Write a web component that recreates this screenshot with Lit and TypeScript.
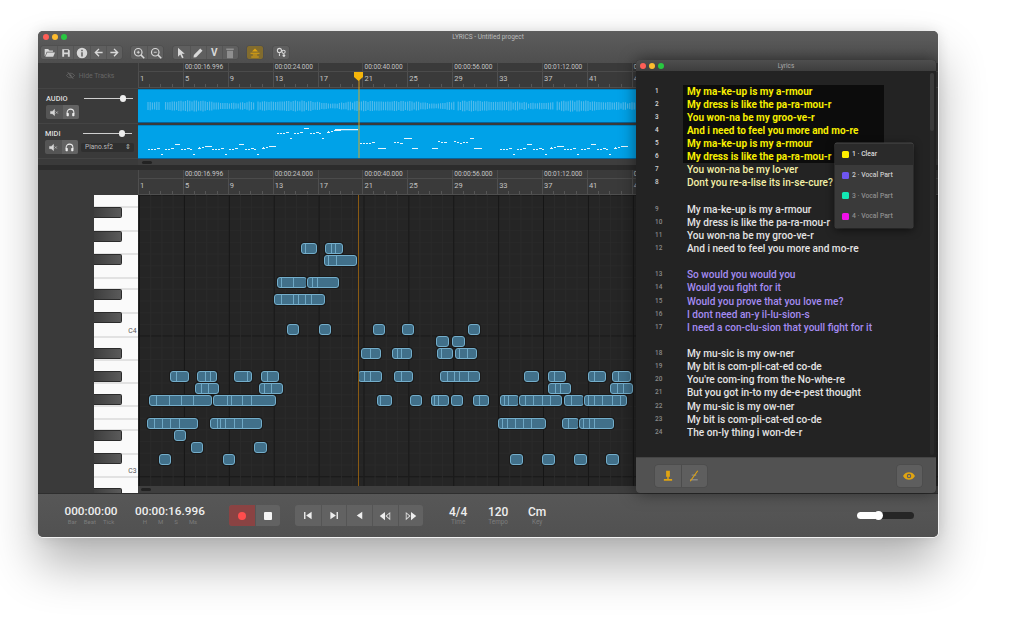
import { LitElement, html, css, svg } from "lit";
import { customElement } from "lit/decorators.js";

const W = "#d8d8d8";
const ic = (body: unknown, fill = W, size = 11) =>
  html`<svg width=${size} height=${size} viewBox="0 0 16 16" fill=${fill}>${body}</svg>`;

const icons = {
  folder: ic(svg`<path d="M1 3h5l2 2h5v2H4L1.5 13H1zM4.6 8H16l-2.6 6H2z"/>`),
  save: ic(svg`<path d="M2 2h10l2 2v10H2zM5 3v4h6V3zM5 10v4h6v-4z" fill-rule="evenodd"/>`, W, 10),
  info: ic(svg`<path d="M8 1a7 7 0 110 14A7 7 0 018 1zM7 3.5v2h2v-2zM7 7v5.5h2V7z" fill-rule="evenodd"/>`, W, 12),
  left: ic(svg`<path d="M8 2l1.4 1.4L6 7h8v2H6l3.4 3.6L8 14 2 8z"/>`),
  right: ic(svg`<path d="M8 2L6.6 3.4 10 7H2v2h8l-3.4 3.6L8 14l6-6z"/>`),
  zoomIn: ic(svg`<circle cx="7" cy="7" r="5" fill="none" stroke=${W} stroke-width="1.6"/><path d="M10.5 10.5L15 15" stroke=${W} stroke-width="2"/><path d="M5 7h4M7 5v4" stroke=${W} stroke-width="1.2"/>`, "none", 12),
  zoomOut: ic(svg`<circle cx="7" cy="7" r="5" fill="none" stroke=${W} stroke-width="1.6"/><path d="M10.5 10.5L15 15" stroke=${W} stroke-width="2"/><path d="M5 7h4" stroke=${W} stroke-width="1.2"/>`, "none", 12),
  cursor: ic(svg`<path d="M4 1l9 8H9l2.5 5-2 1L7 10l-3 3z"/>`, W, 12),
  pencil: ic(svg`<path d="M11 2l3 3-8.5 8.5L2 14l.5-3.5z"/>`, W, 12),
  trash: ic(svg`<path d="M3 2h10v2H3zM4 5h8v10H4z" fill="#8f8f8f"/>`, "#8f8f8f", 12),
  gold: ic(svg`<path d="M8 2l4 4H4zM2 7.5h12v1.4H2zM5 10h6v1.4H5zM3 12.5h10V14H3z"/>`, "#e0a411", 12),
  knobs: ic(svg`<circle cx="5" cy="5" r="3" fill="none" stroke=${W} stroke-width="1.6"/><circle cx="11" cy="7" r="2.4" fill="none" stroke=${W} stroke-width="1.5"/><circle cx="11.5" cy="12.5" r="2" fill=${W}/><path d="M5 9v4" stroke=${W} stroke-width="1.5"/>`, "none", 11),
  mute: ic(svg`<path d="M1 6h3l4-3.5v11L4 10H1zM10 6l4 4M14 6l-4 4" stroke=${W} stroke-width="1"/>`),
  phones: ic(svg`<path d="M2 10V8a6 6 0 0112 0v2" fill="none" stroke="#eee" stroke-width="1.8"/><rect x="1" y="9" width="4" height="5.5" rx="1" fill="#eee"/><rect x="11" y="9" width="4" height="5.5" rx="1" fill="#eee"/>`, "none"),
  toStart: ic(svg`<path d="M3 3h2v10H3zM14 2.5v11L6 8z"/>`, "#eee"),
  toEnd: ic(svg`<path d="M13 3h-2v10h2zM2 2.5v11L10 8z"/>`, "#eee"),
  back: ic(svg`<path d="M12 2.5v11L4 8z"/>`, "#eee"),
  rew: ic(svg`<path d="M8 2.5v11L1 8z"/><path d="M15 2.500v11L8.500 8zM13.800 5L10.500 8l3.300 3z" fill="#ddd" fill-rule="evenodd"/>`, "#eee", 12),
  ffw: ic(svg`<path d="M8 2.500v11L15 8z"/><path d="M1 2.500v11L7.500 8zM2.200 5L5.500 8l-3.300 3z" fill="#ddd" fill-rule="evenodd"/>`, "#eee", 12),
  mic: ic(svg`<path d="M5.500 1h5v8h-5zM7 9h2v3H7zM2.500 12h11v2.200h-11z"/>`, "#e0a411", 12),
  micOff: ic(svg`<path d="M3 12h10v2H3zM5 6h6v1.500H5z" fill="#888"/><path d="M13 1L3 15" stroke="#e0a411" stroke-width="1.500"/>`, "none", 12),
  eye: ic(svg`<path d="M0 8c2-3.600 5-5 8-5s6 1.400 8 5c-2 3.600-5 5-8 5s-6-1.400-8-5zM8 5a3 3 0 100 6 3 3 0 000-6z" fill-rule="evenodd"/><circle cx="8" cy="8" r="1.500"/>`, "#e0a411", 12),
  hide: ic(svg`<path d="M1 8c2-3 4.500-4 7-4s5 1 7 4c-2 3-4.500 4-7 4S3 11 1 8z" fill="none" stroke="#6d6d6d" stroke-width="1.400"/><circle cx="8" cy="8" r="1.800" fill="#6d6d6d"/><path d="M3 2l10 12" stroke="#6d6d6d" stroke-width="1.400"/>`, "none", 9),
};

const timeLabels = ["", "00:00:16.996", "", "00:00:24.000", "", "00:00:40.000", "", "00:00:56.000", "", "00:01:12.000", "", "00:01:28.000"];
const bars = Array.from({ length: 12 }, (_, i) => 1 + i * 4);

@customElement("time-ruler")
class TimeRuler extends LitElement {
  static styles = css`
    :host { display: block; height: 100%; background: #3a3a3a; overflow: hidden; font: 400 6.600px Roboto, sans-serif; color: #c4c4c4; }
    .top { display: flex; height: 8px; border-bottom: 1px solid #4b4b4b; }
    .top span { flex: 0 0 44.9px; box-sizing: border-box; border-left: 1px solid #4b4b4b; padding-left: 1px; line-height: 8px; white-space: nowrap; }
    .bot { display: flex; height: 15px; border-bottom: 1px solid #4f4f4f; }
    .bot span { flex: 0 0 44.9px; box-sizing: border-box; border-left: 1px solid #4f4f4f; padding: 2px 0 0 1px; line-height: 9px; white-space: nowrap;
      font-size: 7.500px;
      background: repeating-linear-gradient(90deg, transparent 0 10.2px, #565656 10.2px 11.22px) 0 100% / 100% 3px no-repeat; }
  `;
  render() {
    return html`<div class="top">${timeLabels.map((t) => html`<span>${t}</span>`)}</div>
      <div class="bot">${bars.map((b) => html`<span>${b}</span>`)}</div>`;
  }
}

function wavePath() {
  let d = "";
  const gaps = [[160, 164], [255, 257], [455, 457], [554, 556]];
  for (let x = 10; x < 500; x += 2.2) {
    const real = x + 138;
    if (gaps.some(([a, b]) => real > a && real < b)) continue;
    const env = 2 + 2.2 * Math.abs(Math.sin(x * 0.032));
    const h = env + 1.6 * Math.abs(Math.sin(x * 0.41)) * Math.abs(Math.sin(x * 1.37));
    d += `M${x.toFixed(1)} ${(16 - h).toFixed(1)}v${(h * 2).toFixed(1)}`;
  }
  return d;
}

// One phrase of the mini MIDI view: [dx, y, width]
const motif = [[0,23,2],[3,23,2],[6,23,2],[9,22,3],[13,28,2],[17,23,2],[20,23,2],[23,22,3],[27,18,5],[33,23,2],[36,23,2],[39,22,3],[42,23,2],[45,28,2],[51,21,1],[50,22,3],[54,21,2],[57,20,7]];
function midiPath() {
  let d = "";
  const put = (ox: number, dy: number) =>
    motif.forEach(([x, y, w]) => { d += `M${ox + x} ${y + dy}h${w}v1h${-w}z`; });
  put(10, 0); put(74, 0);
  put(139, -16);
  d += "M197 3h23v1.300h-23z";
  [[222,17,2],[225,17,2],[228,17,2],[231,17,2],[234,16,3],[240,22,8],[256,16,2],[259,16,2],[262,17,3],[266,12,8],[274,22,6],[294,22,6],[300,15,2],[303,16,2],[306,16,3],[316,15,2],[319,16,2],[322,17,2],[325,16,2],[328,16,2],[332,12,4],[336,22,8]].forEach(([x, y, w]) => {
    d += `M${x} ${y}h${w}v1h${-w}z`;
  });
  put(362, 0); put(426, 0);
  return d;
}

const keyTops = [207, 231, 254, 289, 312, 348, 371, 394, 430, 453, 488];
const keyLines = [206, 230, 253, 277, 288, 312, 336, 359, 382, 405, 418, 429, 453, 476];

type Note = [number, number, number, number[]];
const notes: Note[] = [
  [301, 16, 243, [3]], [325, 18, 243, [5, 9]],
  [324, 33, 254.5, [3, 11]],
  [277, 30, 277, [3, 15]], [307, 32, 277, [4, 9]],
  [274, 51, 294, [6, 18, 23, 30, 36]],
  [287, 12, 324, []], [319, 12, 324, []], [373, 12, 324, []], [402, 12, 324, []], [468, 12, 324, []],
  [436, 13, 336, []], [452, 13, 336, []],
  [361, 20, 348, [8]], [392, 20, 348, [4, 8]], [437, 16, 348, [3]], [455, 22, 348, [3, 11]],
  [170, 19, 371, [5]], [197, 20, 371, [7, 12]], [234, 18, 371, [12]], [261, 18, 371, [5]],
  [358, 24, 371, [5, 11]], [394, 19, 371, [6]], [440, 40, 371, [6, 13, 18, 27]],
  [524, 15, 371, []], [548, 18, 371, [5]], [588, 18, 371, [5]], [612, 19, 371, [5]],
  [195, 24, 383, [5, 12]], [259, 24, 383, [4, 11]], [548, 23, 383, [6, 11]], [610, 23, 383, [6, 12]],
  [149, 63, 395, [6, 19, 31, 43]], [213, 63, 395, [13, 17, 28, 37]],
  [377, 15, 395, [2]], [410, 12, 395, []], [431, 18, 395, [2, 6]], [451, 12, 395, []], [473, 16, 395, [5]],
  [500, 19, 395, [3, 7]], [519, 43, 395, [5, 13, 22, 30]], [564, 20, 395, [6]], [584, 43, 395, [3, 9, 17, 27, 35]],
  [147, 51, 418, [6, 14, 22, 31]], [210, 52, 418, [6, 9, 14, 23, 31]],
  [498, 48, 418, [3, 8, 16, 24, 32]], [562, 17, 418, [5]], [579, 35, 418, [3, 9, 14]],
  [174, 12, 430, []], [191, 12, 442, []], [254, 13, 442, []],
  [159, 12, 454, []], [223, 12, 454, []], [510, 13, 454, []], [542, 13, 454, []], [574, 13, 454, []], [606, 13, 454, []],
];

const lyricLines: [string, string][] = [
  ["My ma-ke-up is my a-rmour", "sel"], ["My dress is like the pa-ra-mou-r", "sel"],
  ["You won-na be my groo-ve-r", "sel"], ["And i need to feel you more and mo-re", "sel"],
  ["My ma-ke-up is my a-rmour", "sel"], ["My dress is like the pa-ra-mou-r", "sel"],
  ["You won-na be my lo-ver", "pale"], ["Dont you re-a-lise its in-se-cure?", "pale"], ["", ""],
  ["My ma-ke-up is my a-rmour", ""], ["My dress is like the pa-ra-mou-r", ""],
  ["You won-na be my groo-ve-r", ""], ["And i need to feel you more and mo-re", ""], ["", ""],
  ["So would you would you", "vio"], ["Would you fight for it", "vio"], ["Would you prove that you love me?", "vio"],
  ["I dont need an-y il-lu-sion-s", "vio"], ["I need a con-clu-sion that youll fight for it", "vio"], ["", ""],
  ["My mu-sic is my ow-ner", ""], ["My bit is com-pli-cat-ed co-de", ""], ["You're com-ing from the No-whe-re", ""],
  ["But you got in-to my de-e-pest thought", ""], ["My mu-sic is my ow-ner", ""], ["My bit is com-pli-cat-ed co-de", ""],
  ["The on-ly thing i won-de-r", ""],
];

const menuItems = [
  ["1 · Clear", "#ffee00", "act"], ["2 · Vocal Part", "#6f55f0", "lit"],
  ["3 · Vocal Part", "#12e8b4", ""], ["4 · Vocal Part", "#f010e8", ""],
];

@customElement("app-root")
class AppRoot extends LitElement {
  static styles = css`
    :host { display: block; height: 629px; background: #fff; font-family: Roboto, sans-serif; overflow: hidden; }
    .win { position: relative; margin: 31px 0 0 38px; width: 900px; height: 506px; border-radius: 5px; overflow: hidden; display: flex; flex-direction: column; background: #555; }
    .shadow { position: absolute; left: 38px; top: 31px; width: 900px; height: 506px; border-radius: 5px; box-shadow: 0 1px 0 #f2f2f2, 1px 0 0 #f2f2f2, 0 28px 48px rgba(0,0,0,.3), 0 0 14px rgba(0,0,0,.12); }
    .head { position: relative; height: 32px; flex: none; background: linear-gradient(#5d5d5d, #4e4e4e); }
    .lights { display: flex; gap: 3px; }
    .lights i { width: 6px; height: 6px; border-radius: 50%; }
    .r { background: #ff5f57; } .y { background: #febc2e; } .g { background: #28c840; }
    .head .lights { position: absolute; left: 5px; top: 3px; }
    .title { text-align: center; font-size: 6.500px; color: #bdbdbd; line-height: 12px; }
    .tools { display: flex; padding: 3px 0 0 3px; height: 13px; }
    .grp { display: flex; background: #5f5f5f; border-radius: 2px; box-shadow: 0 0 0 .5px #4a4a4a; }
    .grp button { all: unset; display: flex; align-items: center; justify-content: center; width: 16.2px; box-sizing: border-box; height: 13px; border-left: 1px solid #555; font: 700 10px Roboto, sans-serif; color: #d8d8d8; }
    .grp button:first-child { border-left: 0; }
    .g2 { margin-left: 9px; } .g3 { margin-left: 10px; } .g4 { margin-left: 9px; background: #826c2e; } .g5 { margin-left: 10px; }

    .tracks { height: 102px; flex: none; display: grid; grid-template-columns: 100px 1fr; background: #3a3a3a; position: relative; }
    .tleft { display: flex; flex-direction: column; }
    .hide { height: 26px; display: flex; align-items: center; justify-content: center; gap: 4px; font-size: 6.800px; color: #666; box-sizing: border-box; border-bottom: 1px solid #444; padding-left: 4px; }
    .trk { height: 35px; box-sizing: border-box; padding: 3px 0 0 7px; border-bottom: 1px solid #444; display: grid; grid-template-columns: 38px 1fr; grid-template-rows: 13px 14px; align-items: center; font-size: 7.400px; font-weight: 500; color: #ddd; }
    .trk.a { padding-left: 8px; }
    .trk .sl { position: relative; height: 1.500px; background: #cfcfcf; width: 49px; }
    .sl i { position: absolute; right: 7px; top: -2.500px; width: 6.500px; height: 6.500px; border-radius: 50%; background: #eee; }
    .trk .mini { grid-column: 1; display: flex; width: 33px; height: 14px; background: #555; border-radius: 2px; overflow: hidden; }
    .mini span { flex: 1; display: flex; align-items: center; justify-content: center; }
    .mini span + span { background: #636363; }
    .mini svg { width: 9px; height: 9px; }
    .sel-sf { width: 53px; height: 9px; box-sizing: border-box; margin-left: -2px; background: #2f2f2f; border-radius: 2px; color: #bbb; font-size: 6.600px; font-weight: 400; line-height: 9px; padding: 0 3px 0 4px; display: flex; justify-content: space-between; }
    .tright { display: flex; flex-direction: column; min-width: 0; }
    .tright time-ruler { height: 26px; flex: none; }
    .clip { height: 34px; flex: none; background: #00a2e8; border-top: 1px solid #0086c6; border-bottom: 1px solid #07639a; box-sizing: border-box; margin-right: 2px; }
    .clip + .clip { margin-top: 2px; }
    .clip svg { display: block; }
    .sb { flex: 1; background: #3e3e3e; padding: 2px 0 0 4px; }
    .sb i { display: block; width: 10px; height: 3px; border-radius: 2px; background: #222; }
    .sep { height: 5px; flex: none; background: #2c2c2c; }

    .ph { position: absolute; left: 320px; width: 1.500px; }
    .ph1 { top: 17px; bottom: 7px; background: rgba(236,166,20,.45); }
    .marker { position: absolute; left: 316px; top: 9px; }
    .ph2 { top: 0; bottom: 7px; background: #8a5a12; z-index: 3; left: 219.500px; }
    .rollwrap { height: 323px; flex: none; display: grid; grid-template-columns: 100px 1fr; grid-template-rows: 25px 298px; background: #3a3a3a; }
    .rollwrap time-ruler { height: 25px; }
    .corner { grid-row: 1 / span 2; display: flex; flex-direction: column; min-height: 0; }
    .corner .blank { height: 25px; flex: none; }
    .pianoarea { flex: 1; display: flex; min-height: 0; }
    .pianoarea .pad { width: 56px; flex: none; }
    .piano { width: 44px; background: #fafafa; position: relative; overflow: hidden; }
    .kl { position: absolute; left: 0; right: 0; height: 1.500px; background: #e2e2e2; }
    .kb { position: absolute; left: 0; width: 28px; height: 11px; box-sizing: border-box; background: linear-gradient(90deg, #3e3e3e, #5a5a5a); border: 1px solid #2b2b2b; border-left: 0; border-radius: 0 2px 2px 0; }
    .c { position: absolute; right: 1.500px; font-size: 6.800px; color: #555; line-height: 8px; }
    .gridcol { display: flex; flex-direction: column; min-height: 0; position: relative; overflow: hidden; }
    .gridbg { flex: 1; position: relative; overflow: hidden; background-color: #252525;
      background-image:
        linear-gradient(90deg, #151515 1px, transparent 1px),
        linear-gradient(90deg, #2a2a2a 1px, transparent 1px),
        linear-gradient(#161616 1px, transparent 1px),
        linear-gradient(#292929 1px, transparent 1px);
      background-size: 44.9px 100%, 11.22px 100%, 100% 140.8px, 100% 11.73px;
      background-position: 1px 0, 1px 0, 0 140.5px, 0 0;
    }
    .n { position: absolute; height: 11px; box-sizing: border-box; background: #41708a; border: 1px solid #74aecb; border-radius: 3px; box-shadow: 0 0 0 1px #1a1a1a; overflow: hidden; }
    .n i { position: absolute; top: 0; bottom: 0; width: 1px; background: #6fa8c5; }
    .gsb { height: 7px; flex: none; background: #3e3e3e; padding: 2px 0 0 3px; box-sizing: border-box; }
    .gsb i { display: block; width: 10px; height: 3px; border-radius: 2px; background: #222; }

    .trans { flex: 1; display: flex; align-items: center; border-top: 1.500px solid #2e2e2e; background: linear-gradient(#575757, #515151); padding-left: 27px; color: #eee; }
    .clock { display: flex; flex-direction: column; align-items: center; width: 52px; }
    .clock b { font-weight: 500; font-size: 11.800px; line-height: 13px; white-space: nowrap; }
    .clock small { display: flex; gap: 7px; font-size: 6px; color: #7c7c7c; line-height: 8px; white-space: nowrap; }
    .clock2 { margin-left: 19px; width: 68px; }
    .clock2 small { gap: 11px; }
    .bgrp { display: flex; height: 21px; border-radius: 3px; background: #626262; overflow: hidden; }
    .bgrp button { all: unset; display: flex; align-items: center; justify-content: center; width: 25.600px; height: 21px; border-left: 1px solid #555; box-sizing: border-box; }
    .bgrp button:first-child { border-left: 0; }
    .bgrp .rec { background: #8a4343; }
    .rec i { width: 8px; height: 8px; border-radius: 50%; background: #ff4d4d; }
    .stop i { width: 8px; height: 8px; background: #f4f4f4; border-radius: 1px; }
    .mb1 { margin-left: 25px; } .mb2 { margin-left: 15px; }
    .meta { display: flex; flex-direction: column; align-items: center; }
    .meta b { font-size: 12px; font-weight: 500; line-height: 14px; }
    .meta small { font-size: 6.400px; color: #7d7d7d; line-height: 7px; }
    .m1 { margin-left: 26px; width: 18px; } .m2 { margin-left: 21px; width: 20px; } .m3 { margin-left: 20px; width: 18px; }
    .vol { margin-left: auto; margin-right: 24px; width: 57px; height: 7px; border-radius: 4px; background: #262626; position: relative; }
    .vol u { position: absolute; left: 0; top: 0; bottom: 0; width: 21px; background: #fff; border-radius: 4px; }
    .vol i { position: absolute; left: 17px; top: -1.500px; width: 9px; height: 9px; border-radius: 50%; background: #fff; }

    .lyr { position: absolute; left: 598px; top: 29px; width: 300px; height: 433px; border-radius: 4px; overflow: hidden; display: flex; flex-direction: column; background: #232323; box-shadow: 0 0 16px rgba(0,0,0,.5); z-index: 5; }
    .lbar { height: 11px; flex: none; position: relative; background: linear-gradient(#4e4e4e, #3e3e3e); text-align: center; font-size: 6.400px; line-height: 12px; color: #aaa; }
    .lbar .lights { position: absolute; left: 4px; top: 2.500px; }
    .lbody { flex: 1; position: relative; padding: 13.500px 0 0 19px; min-height: 0; }
    .line { display: grid; grid-template-columns: 28px 201px; height: 13.130px; line-height: 13.130px; }
    .line em { font-style: normal; font-size: 6.400px; font-weight: 500; color: #cfcfcf; }
    .line span { display: block; padding-left: 4px; font-size: 10.100px; font-weight: 500; color: #e4e4e4; white-space: nowrap; }
    .line.sel span { background: #0c0c0c; color: #f6ee00; font-weight: 700; font-size: 10px; }
    .line.sel em { color: #ddd; }
    .line.pale span { color: #f4f0a8; }
    .line.vio span { color: #a58cf2; }
    .line.vio em, .line.dim em { color: #8a8a8a; }
    .sbar { position: absolute; right: 2px; top: 2px; width: 4px; height: 382px; background: #2a2a2a; border-radius: 2px; }
    .sbar i { display: block; height: 58px; background: #3a3a3a; border-radius: 2px; }
    .lfoot { height: 36px; flex: none; background: #525252; display: flex; align-items: center; justify-content: space-between; padding: 0 14px 0 19px; border-top: 1px solid #444; box-sizing: border-box; }
    .fg { display: flex; height: 22px; border-radius: 3px; overflow: hidden; background: #5e5e5e; box-shadow: 0 0 0 .5px #484848; }
    .fg span { width: 25.500px; display: flex; align-items: center; justify-content: center; }
    .fg span + span { border-left: 1px solid #4c4c4c; }
    .menu { position: absolute; left: 199px; top: 72px; width: 78px; height: 85px; background: #3a3a3a; border-radius: 2px; box-shadow: 0 2px 8px rgba(0,0,0,.6), 0 0 0 .5px #555; padding-top: 1px; box-sizing: border-box; }
    .mi { display: flex; align-items: center; gap: 3px; height: 20.700px; padding-left: 7px; font-size: 6.800px; color: #8e8e8e; font-weight: 500; }
    .mi i { width: 7px; height: 7px; border-radius: 1.500px; }
    .mi.act { background: #2a2a2a; color: #ddd; }
    .mi.lit { color: #ccc; }
  `;

  render() {
    let num = 0;
    return html`
      <div class="shadow"></div>
      <div class="win">
        <div class="head">
          <div class="lights"><i class="r"></i><i class="y"></i><i class="g"></i></div>
          <div class="title">LYRICS - Untitled progect</div>
          <div class="tools">
            <div class="grp"><button>${icons.folder}</button><button>${icons.save}</button><button>${icons.info}</button><button>${icons.left}</button><button>${icons.right}</button></div>
            <div class="grp g2"><button>${icons.zoomIn}</button><button>${icons.zoomOut}</button></div>
            <div class="grp g3"><button>${icons.cursor}</button><button>${icons.pencil}</button><button>V</button><button>${icons.trash}</button></div>
            <div class="grp g4"><button>${icons.gold}</button></div>
            <div class="grp g5"><button>${icons.knobs}</button></div>
          </div>
        </div>

        <div class="tracks">
          <div class="tleft">
            <div class="hide">${icons.hide}<span>Hide Tracks</span></div>
            <div class="trk a"><span>AUDIO</span><div class="sl"><i></i></div><div class="mini"><span>${icons.mute}</span><span>${icons.phones}</span></div></div>
            <div class="trk"><span>MIDI</span><div class="sl"><i></i></div><div class="mini"><span>${icons.mute}</span><span>${icons.phones}</span></div><div class="sel-sf"><span>Piano.sf2</span><span>⇕</span></div></div>
          </div>
          <div class="tright">
            <time-ruler></time-ruler>
            <div class="clip"><svg width="500" height="32"><path d=${wavePath()} stroke="#54bbec" stroke-width="1.100" fill="none"/></svg></div>
            <div class="clip"><svg width="500" height="32"><path d=${midiPath()} fill="#e8f6fd"/></svg></div>
            <div class="sb"><i></i></div>
          </div>
          <div class="ph ph1"></div>
          <svg class="marker" width="9" height="9" viewBox="0 0 9 9"><path d="M0 0h9v5L4.500 9 0 5z" fill="#f5b50a"/></svg>
        </div>
        <div class="sep"></div>

        <div class="rollwrap">
          <div class="corner">
            <div class="blank"></div>
            <div class="pianoarea">
              <div class="pad"></div>
              <div class="piano">
                ${keyLines.map((y) => html`<div class="kl" style="top:${y - 195}px"></div>`)}
                ${keyTops.map((y) => html`<div class="kb" style="top:${y - 195}px"></div>`)}
                <div class="c" style="top:132px">C4</div>
                <div class="c" style="top:272px">C3</div>
              </div>
            </div>
          </div>
          <time-ruler></time-ruler>
          <div class="gridcol">
            <div class="gridbg">
              ${notes.map(([x, w, y, cuts]) => html`<div class="n" style="left:${x - 138}px;top:${y - 195}px;width:${w}px">${cuts.map((c) => html`<i style="left:${c}px"></i>`)}</div>`)}
            </div>
            <div class="ph ph2"></div>
            <div class="gsb"><i></i></div>
          </div>
        </div>

        <div class="trans">
          <div class="clock"><b>000:00:00</b><small><span>Bar</span><span>Beat</span><span>Tick</span></small></div>
          <div class="clock clock2"><b>00:00:16.996</b><small><span>H</span><span>M</span><span>S</span><span>Ms</span></small></div>
          <div class="bgrp mb1"><button class="rec"><i></i></button><button class="stop"><i></i></button></div>
          <div class="bgrp mb2"><button>${icons.toStart}</button><button>${icons.toEnd}</button><button>${icons.back}</button><button>${icons.rew}</button><button>${icons.ffw}</button></div>
          <div class="meta m1"><b>4/4</b><small>Time</small></div>
          <div class="meta m2"><b>120</b><small>Tempo</small></div>
          <div class="meta m3"><b>Cm</b><small>Key</small></div>
          <div class="vol"><u></u><i></i></div>
        </div>

        <div class="lyr">
          <div class="lbar"><div class="lights"><i class="r"></i><i class="y"></i><i class="g"></i></div>Lyrics</div>
          <div class="lbody">
            ${lyricLines.map(([t, k]) => {
              if (!t) return html`<div class="line"></div>`;
              num++;
              return html`<div class="line ${k} ${num > 8 ? "dim" : ""}"><em>${num}</em><span>${t}</span></div>`;
            })}
            <div class="sbar"><i></i></div>
            <div class="menu">
              ${menuItems.map(([t, c, k]) => html`<div class="mi ${k}"><i style="background:${c}"></i>${t}</div>`)}
            </div>
          </div>
          <div class="lfoot">
            <div class="fg"><span>${icons.mic}</span><span>${icons.micOff}</span></div>
            <div class="fg"><span>${icons.eye}</span></div>
          </div>
        </div>
      </div>
    `;
  }
}
